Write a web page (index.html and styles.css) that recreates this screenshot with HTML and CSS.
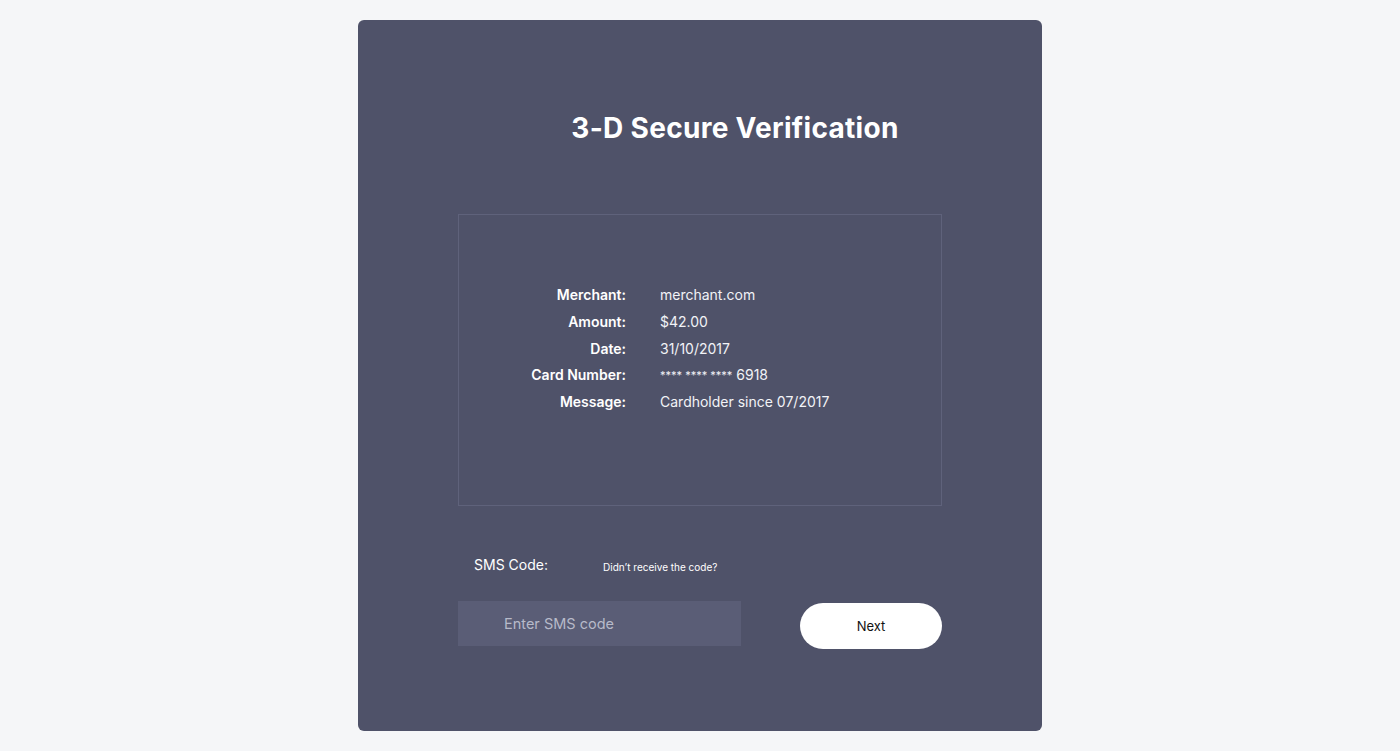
FILE: index.html
```html
<!DOCTYPE html>
<html lang="en">
<head>
  <meta charset="UTF-8">
  <meta name="viewport" content="width=device-width, initial-scale=1">
  <title>3-D Secure Verification</title>
  <link rel="stylesheet" href="styles.css">
</head>
<body>

  <div class="card">
    <h1>3-D Secure Verification</h1>

    <!-- datos de la transacción -->
    <div class="details">
      <span class="label">Merchant:</span><span class="value">merchant.com</span>
      <span class="label">Amount:</span><span class="value">$42.00</span>
      <span class="label">Date:</span><span class="value">31/10/2017</span>
      <span class="label">Card Number:</span><span class="value"><span class="stars">**** **** ****</span> 6918</span>
      <span class="label">Message:</span><span class="value">Cardholder since 07/2017</span>
    </div>

    <div class="sms-head">
      <span class="sms-label">SMS Code:</span>
      <a class="resend" href="#">Didn’t receive the code?</a>
    </div>

    <div class="sms-row">
      <input class="sms-input" type="text" placeholder="Enter SMS code">
      <button class="next-btn">Next</button>
    </div>
  </div>

</body>
</html>
```

FILE: styles.css
```css
* { margin:0; padding:0; box-sizing:border-box; }
html, body { width:100%; height:100%; background:#f5f6f8; color:#fff; font-family:Inter, "Noto Sans", sans-serif; }

.card {
  width:684px;
  margin:20px 0 0 calc(50% - 342px);
  padding:90px 100px 82px;
  background:#4f5269;
  border-radius:6px;
}
h1 {
  font-size:28px;
  line-height:36px;
  font-weight:700;
  text-align:center;
  padding-left:70px;
  letter-spacing:0.3px;
}
.details {
  margin-top:68px;
  border:1px solid #5f627b;
  padding:67px 0 89px;
  display:grid;
  grid-template-columns:167px 1fr;
  column-gap:34px;
  row-gap:0;
  font-size:14px;
  line-height:26.75px;
}
.label { text-align:right; font-weight:600; }
.value { font-weight:400; color:#f2f3f7; }
.stars { font-size:11px; vertical-align:1px; }

.sms-head {
  margin-top:49px;
  display:flex;
  align-items:baseline;
  padding-left:16px;
  line-height:20px;
}
.sms-label { font-size:14px; width:129px; }
.resend { font-size:10px; color:#fff; text-decoration:none; position:relative; top:1px; }

.sms-row {
  margin-top:25px;
  display:flex;
  justify-content:space-between;
  align-items:flex-start;
}
.sms-input {
  width:283px;
  height:45px;
  background:#5a5d76;
  border:none;
  outline:none;
  padding-left:46px;
  font-family:inherit;
  font-size:14.5px;
  color:#fff;
}
.sms-input::placeholder { color:#b7bac9; }
.next-btn {
  margin-top:2px;
  width:142px;
  height:46px;
  border:none;
  border-radius:23px;
  background:#fff;
  color:#111;
  font-family:inherit;
  font-size:13px;
  cursor:pointer;
}
```
